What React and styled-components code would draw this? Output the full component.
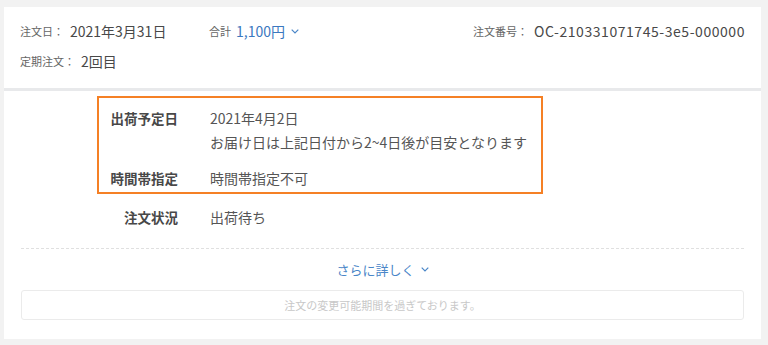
import styled, { createGlobalStyle } from "styled-components"

const GlobalStyle = createGlobalStyle`
body{
  margin:0;
  background:#f2f2f2;
  font-family:"Noto Sans CJK JP","Noto Sans",sans-serif;
}
`

const Page = styled.div`
padding: 7px 7px 6px 4px;
`
const Card = styled.div`
background:#fff;
`
const Header = styled.div`
height:84px;
padding: 0 16px;
border-bottom: 3px solid #e8e9eb;
box-sizing: border-box;
display:flex;
flex-direction:column;
`
const HeaderRow = styled.div`
display:flex;
align-items:center;
height:20px;
margin-top:${props=>props.top}px;
`
const Item = styled.div`
display:flex;
align-items:center;
width:${props=>props.width ? props.width + "px" : "auto"};
margin-left:${props=>props.right ? "auto" : "0"};
`
const SmallLabel = styled.span`
font-size:11px;
color:#666;
`
const Value = styled.span`
font-size:14px;
color:#484848;
margin-left:${props=>props.gap || 0}px;
letter-spacing:${props=>props.spaced ? "0.55px" : "0"};
`
const Price = styled.span`
font-size:14px;
color:#3b78c0;
margin-left:5px;
`
const Chevron = styled.svg`
margin-left:${props=>props.gap || 6}px;
`
const Detail = styled.div`
padding: 5px 17px 19px 17px;
`
const Highlight = styled.div`
margin-left:76px;
width:446px;
box-sizing:border-box;
border:2px solid #f58025;
padding: 8px 0 2px;
`
const Row = styled.div`
display:flex;
margin-top:${props=>props.top || 0}px;
`
const Label = styled.div`
width:${props=>props.width || 79}px;
text-align:right;
font-size:13.5px;
font-weight:bold;
color:#484848;
line-height:24px;
flex-shrink:0;
`
const Values = styled.div`
margin-left:32px;
font-size:14px;
color:#555;
line-height:24px;
`
const Dashed = styled.div`
border-top:1px dashed #e0e0e0;
margin-top:19px;
`
const More = styled.div`
display:flex;
justify-content:center;
align-items:center;
margin-top:10px;
height:20px;
font-size:13px;
color:#4a86c8;
`
const Notice = styled.div`
margin-top:11px;
height:30px;
box-sizing:border-box;
border:1px solid #ebebeb;
border-radius:3px;
display:flex;
align-items:center;
justify-content:center;
font-size:11px;
color:#c8c8c8;
`

const Down = ({ gap, color }) => (
  <Chevron gap={gap} width="8" height="5" viewBox="0 0 8 5">
    <polyline points="0.7,0.7 4,4 7.3,0.7" fill="none" stroke={color} strokeWidth="1.2" />
  </Chevron>
)

const App = () => {
  return (
    <Page>
      <GlobalStyle/>
      <Card>
        <Header>
          <HeaderRow top={14}>
            <Item width={189}>
              <SmallLabel>注文日：</SmallLabel>
              <Value gap={6}>2021年3月31日</Value>
            </Item>
            <Item>
              <SmallLabel>合計</SmallLabel>
              <Price>1,100円</Price>
              <Down gap={6} color="#4a86c8"/>
            </Item>
            <Item right>
              <SmallLabel>注文番号：</SmallLabel>
              <Value gap={6} spaced>OC-210331071745-3e5-000000</Value>
            </Item>
          </HeaderRow>
          <HeaderRow top={10}>
            <Item>
              <SmallLabel>定期注文：</SmallLabel>
              <Value gap={6}>2回目</Value>
            </Item>
          </HeaderRow>
        </Header>
        <Detail>
          <Highlight>
            <Row>
              <Label>出荷予定日</Label>
              <Values>
                2021年4月2日<br/>
                お届け日は上記日付から2~4日後が目安となります
              </Values>
            </Row>
            <Row top={12}>
              <Label>時間帯指定</Label>
              <Values>時間帯指定不可</Values>
            </Row>
          </Highlight>
          <Row top={11}>
            <Label width={157}>注文状況</Label>
            <Values>出荷待ち</Values>
          </Row>
          <Dashed/>
          <More>
            さらに詳しく
            <Down gap={6} color="#4a86c8"/>
          </More>
          <Notice>注文の変更可能期間を過ぎております。</Notice>
        </Detail>
      </Card>
    </Page>
  )
}

export default App
